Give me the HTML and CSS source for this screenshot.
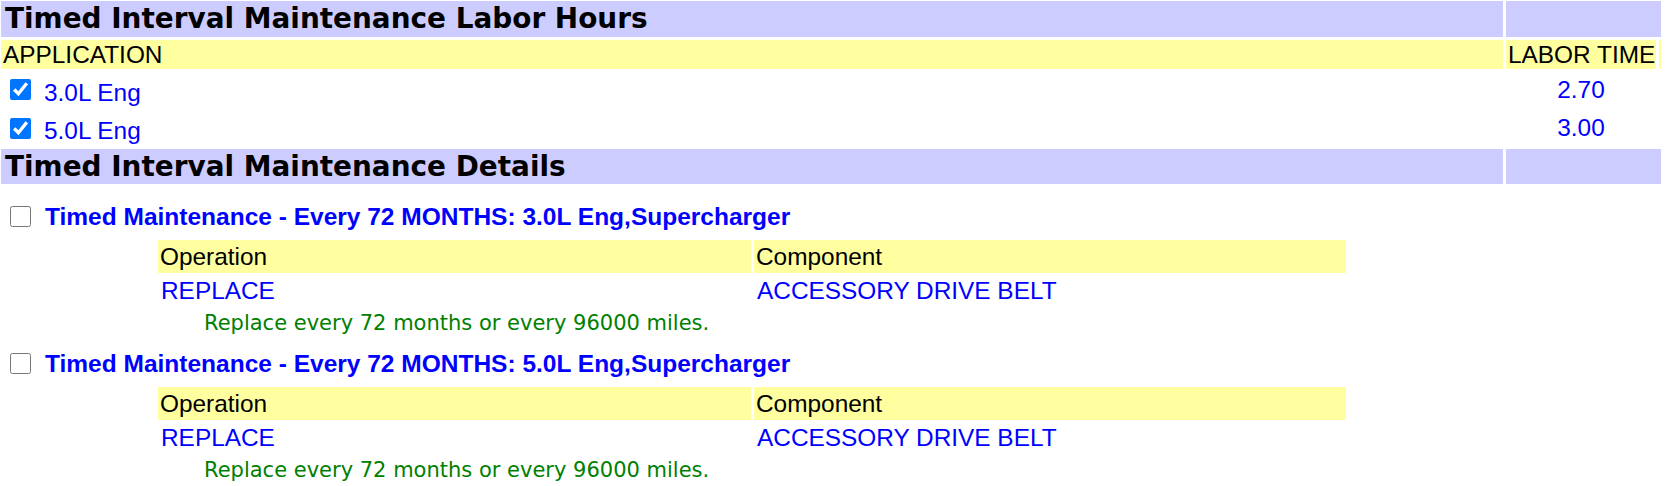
FILE: index.html
```html
<!DOCTYPE html>
<html>
<head>
<meta charset="utf-8">
<title>Timed Interval Maintenance</title>
<link rel="stylesheet" href="styles.css">
</head>
<body>
<div class="labor">
  <div class="hdr">Timed Interval Maintenance Labor Hours</div>
  <div class="hdr hdr-side"></div>
  <div class="colhead">APPLICATION</div>
  <div class="colhead">LABOR TIME</div>
  <div class="colhead"></div>
  <label class="app"><input type="checkbox" class="chk" checked><span class="app-name">3.0L Eng</span></label>
  <div class="time">2.70</div>
  <div></div>
  <label class="app"><input type="checkbox" class="chk" checked><span class="app-name">5.0L Eng</span></label>
  <div class="time">3.00</div>
  <div></div>
  <div class="hdr">Timed Interval Maintenance Details</div>
  <div class="hdr hdr-side"></div>
</div>

<div class="details">
  <div class="block">
    <label class="dhead"><input type="checkbox" class="chk"><span class="dtitle">Timed Maintenance - Every 72 MONTHS: 3.0L Eng,Supercharger</span></label>
    <div class="sub">
      <div class="subhead">Operation</div>
      <div class="subhead">Component</div>
      <div class="subval">REPLACE</div>
      <div class="subval">ACCESSORY DRIVE BELT</div>
      <div class="note">Replace every 72 months or every 96000 miles.</div>
    </div>
  </div>
  <div class="block">
    <label class="dhead"><input type="checkbox" class="chk"><span class="dtitle">Timed Maintenance - Every 72 MONTHS: 5.0L Eng,Supercharger</span></label>
    <div class="sub">
      <div class="subhead">Operation</div>
      <div class="subhead">Component</div>
      <div class="subval">REPLACE</div>
      <div class="subval">ACCESSORY DRIVE BELT</div>
      <div class="note">Replace every 72 months or every 96000 miles.</div>
    </div>
  </div>
</div>
</body>
</html>
```
FILE: styles.css
```css
html, body {
  margin: 0;
  padding: 0;
  background: #ffffff;
}
body {
  font-family: "Liberation Sans", Arial, sans-serif;
  color: #000000;
}
.labor {
  display: grid;
  grid-template-columns: 1502px 150px 2px;
  grid-template-rows: 36px 29px 35px 36px 35px;
  gap: 3px;
  padding: 1px 0 0 1px;
}
.hdr {
  background: #ccccff;
  font-family: "DejaVu Sans", Verdana, sans-serif;
  font-weight: bold;
  font-size: 27.9px;
  line-height: 36px;
  padding-left: 4px;
  white-space: nowrap;
}
.hdr-side {
  grid-column: span 2;
}
.colhead {
  background: #ffffa0;
  font-size: 24.4px;
  line-height: 29px;
  padding-left: 2px;
  white-space: nowrap;
}
.app {
  display: flex;
  align-items: center;
  gap: 13px;
  padding-left: 9px;
}
.chk {
  width: 21px;
  height: 21px;
  margin: 0;
  flex: none;
}
.app-name {
  color: #0000ff;
  font-size: 24.4px;
  padding-top: 6px;
}
.time {
  color: #0000ff;
  font-size: 24.4px;
  display: flex;
  align-items: center;
  justify-content: center;
}
.details {
  padding-top: 3px;
}
.block {
  display: flex;
  flex-direction: column;
}
.dhead {
  display: flex;
  align-items: center;
  gap: 14px;
  height: 21px;
  margin: 19px 0 10px 10px;
}
.dtitle {
  color: #0000ff;
  font-weight: bold;
  font-size: 24.5px;
  white-space: nowrap;
}
.sub {
  display: grid;
  grid-template-columns: 593px 592px;
  grid-template-rows: 33px 29px auto;
  column-gap: 3px;
  row-gap: 3px;
  margin-left: 158px;
  margin-top: 3px;
}
.subhead {
  background: #ffffa0;
  font-size: 24.4px;
  line-height: 33px;
  padding-left: 2px;
}
.subval {
  color: #0000ff;
  font-size: 24.4px;
  line-height: 29px;
  padding-left: 3px;
}
.note {
  grid-column: span 2;
  color: #008000;
  font-family: "DejaVu Sans", Verdana, sans-serif;
  font-size: 21px;
  line-height: 21px;
  padding: 5px 0 0 46px;
}
```
